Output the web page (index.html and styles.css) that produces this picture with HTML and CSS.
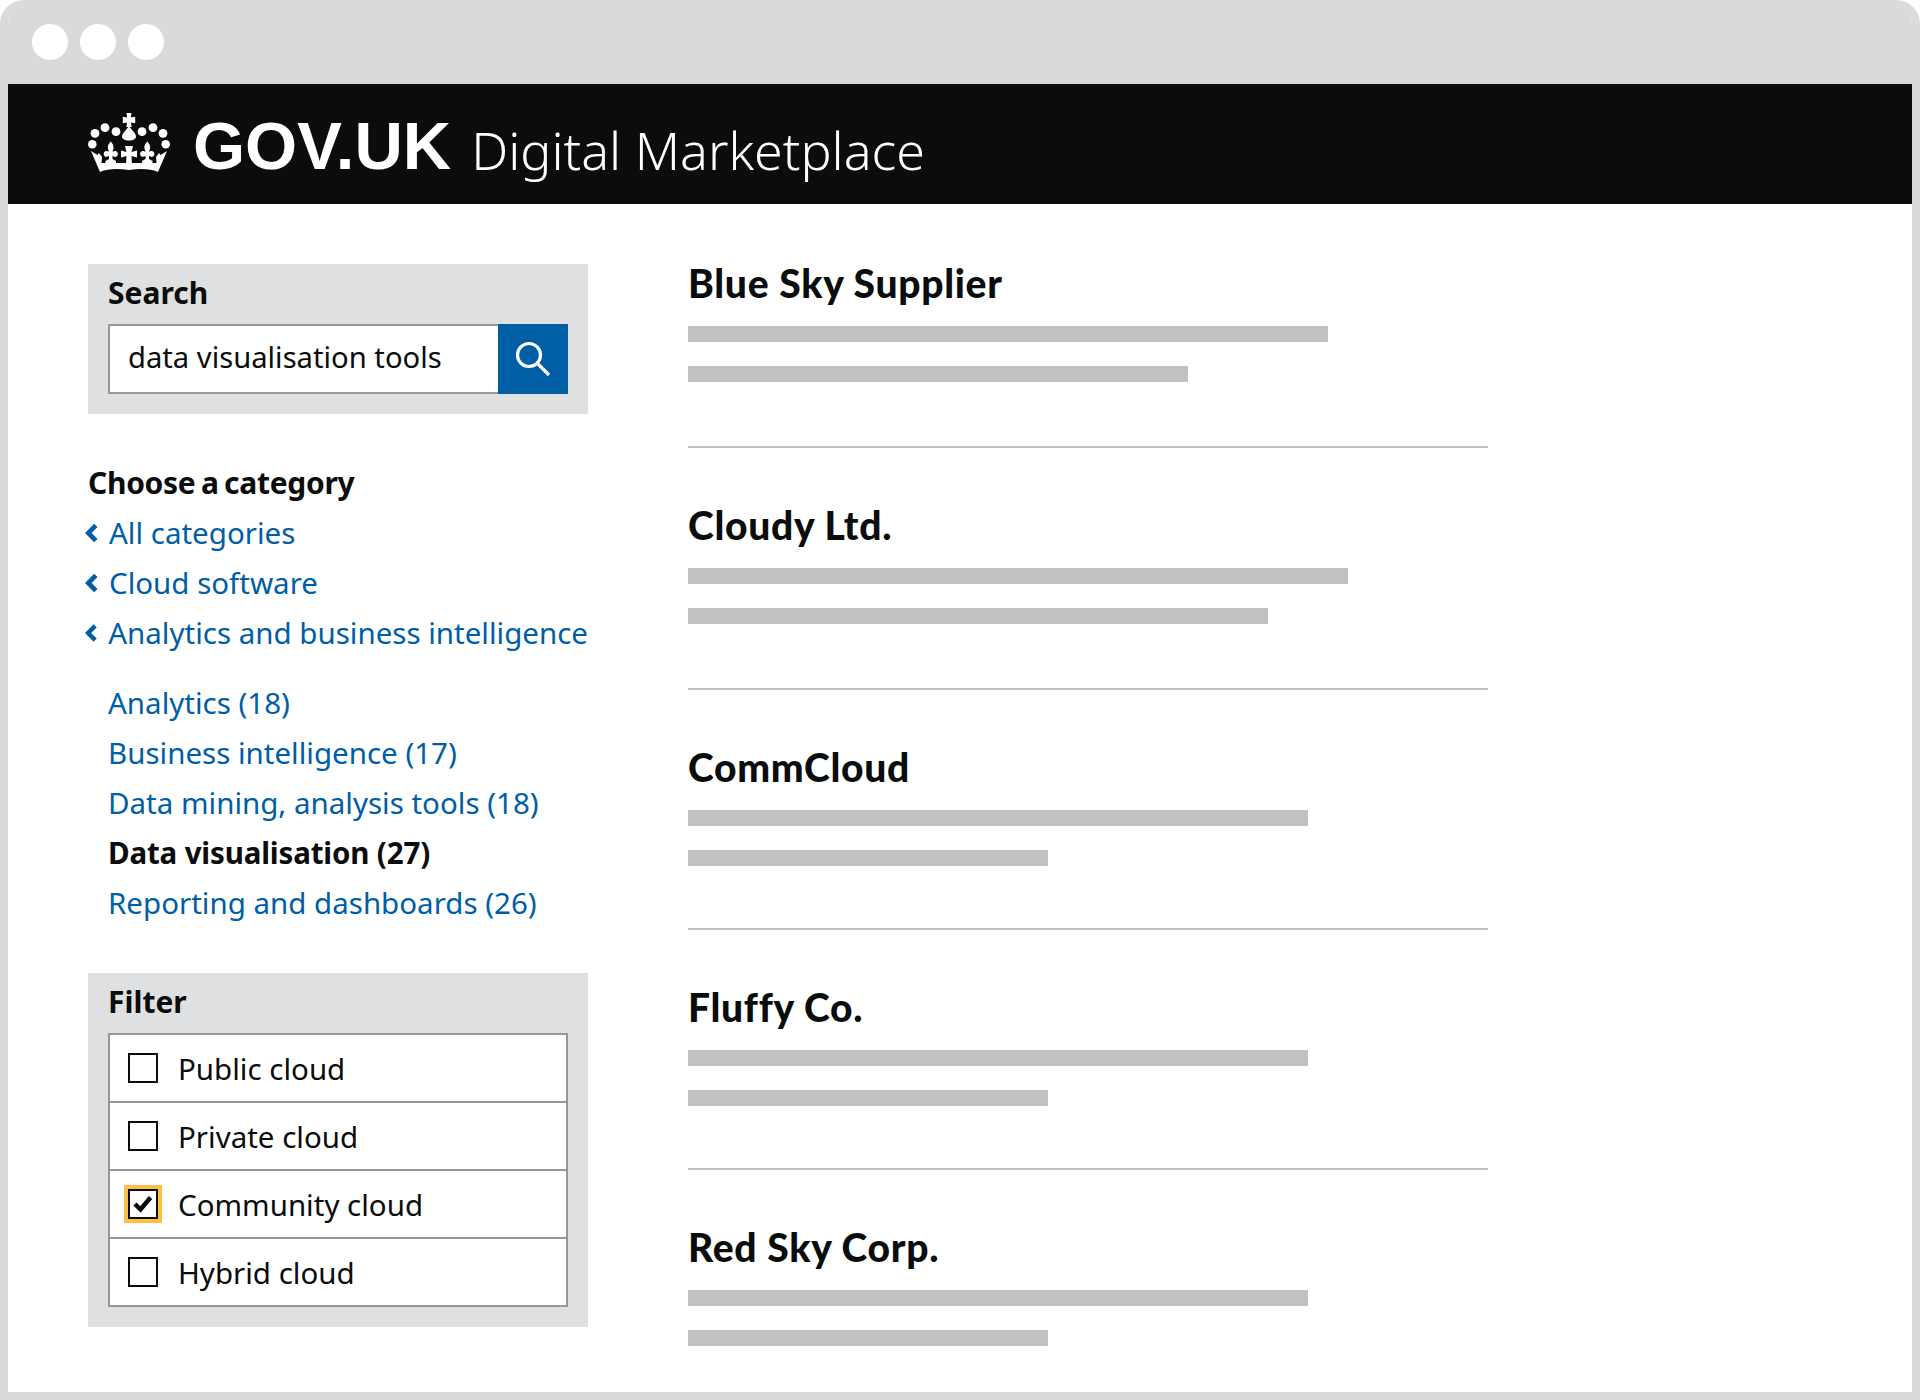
FILE: index.html
```html
<!DOCTYPE html>
<html lang="en">
<head>
    <meta charset="UTF-8">
    <title>Digital Marketplace</title>
    <link rel="stylesheet" href="styles.css">
</head>
<body>
    <div class="browser">
        <div class="browser-bar">
            <span class="dot"></span>
            <span class="dot"></span>
            <span class="dot"></span>
        </div>

        <header class="site-header">
            <svg class="crown" viewBox="0 0 82 60" width="82" height="60" fill="#fff">
                <g id="crown-half">
                    <circle cx="17" cy="14.700" r="4.400"/>
                    <circle cx="28" cy="18.700" r="4.400"/>
                    <circle cx="7" cy="20.300" r="4.400"/>
                    <circle cx="4.300" cy="31.300" r="4.300"/>
                    <!-- outer point and band -->
                    <path d="M3 38l6.500 4 1.500-2 3 4-.5 6H41v7c-11-1.500-21-1.500-29 2z"/>
                    <!-- fleur -->
                    <path d="M22.700 28.500c2.300 2.500 3.800 5 2.300 8.500l-.4 2c1.400-1.500 3.900-1.500 4.900.5 1 2 0 4-2 4.500l-3-1v3l3.500 2v3H17.500v-3l3.500-2v-3l-3 1c-2-.5-3-2.500-2-4.500 1-2 3.500-2 4.800-.5l-.4-2c-1.400-3.500 0-6 2.300-8.500z"/>
                    <!-- left side of the cross -->
                    <path d="M41 33h-4l1.500 6-5.500-1.500v7l5.500-1.500-.5 8h3z"/>
                </g>
                <use href="#crown-half" transform="matrix(-1 0 0 1 82 0)"/>
                <!-- top cross and orb -->
                <path d="M38.500 0h5l-.6 4.600 4.300-.8v6.400l-4.300-.8.800 4.600h-5.400l.8-4.600-4.300.8V3.800l4.300.8z"/>
                <path d="M41 13c2.500 4 7 7 7 10.500 0 2.500-3 4-7 4s-7-1.500-7-4C34 20 38.500 17 41 13z"/>
            </svg>
            <span class="logo-text">GOV.UK</span>
            <span class="service-name">Digital Marketplace</span>
        </header>

        <main class="page">
            <aside class="sidebar">
                <form class="panel search-panel">
                    <label class="panel-title" for="search">Search</label>
                    <div class="search-row">
                        <input class="search-input" id="search" type="text" value="data visualisation tools">
                        <button class="search-button" type="button" aria-label="Search">
                            <svg viewBox="0 0 40 40" width="40" height="40" fill="none" stroke="#fff" stroke-width="3.200">
                                <circle cx="16" cy="16" r="11.500"/>
                                <path d="M24 24l12 12"/>
                            </svg>
                        </button>
                    </div>
                </form>

                <nav class="categories">
                    <h2 class="cat-title">Choose a category</h2>
                    <ul class="cat-parents">
                        <li><svg class="chevron" viewBox="0 0 12 18" width="13" height="20"><path d="M10 2L3 9l7 7"/></svg><a href="#">All categories</a></li>
                        <li><svg class="chevron" viewBox="0 0 12 18" width="13" height="20"><path d="M10 2L3 9l7 7"/></svg><a href="#">Cloud software</a></li>
                        <li><svg class="chevron" viewBox="0 0 12 18" width="13" height="20"><path d="M10 2L3 9l7 7"/></svg><a href="#">Analytics and business intelligence</a></li>
                    </ul>
                    <ul class="cat-children">
                        <li><a href="#">Analytics (18)</a></li>
                        <li><a href="#">Business intelligence (17)</a></li>
                        <li><a href="#">Data mining, analysis tools (18)</a></li>
                        <li class="current">Data visualisation (27)</li>
                        <li><a href="#">Reporting and dashboards (26)</a></li>
                    </ul>
                </nav>

                <div class="panel filter-panel">
                    <div class="panel-title">Filter</div>
                    <div class="filter-list">
                        <div class="filter-row"><span class="checkbox"></span>Public cloud</div>
                        <div class="filter-row"><span class="checkbox"></span>Private cloud</div>
                        <div class="filter-row">
                            <span class="checkbox focused">
                                <svg viewBox="0 0 26 26" width="26" height="26" fill="none" stroke="#0b0c0c" stroke-width="4.500"><path d="M5 13l5.500 5.500L20.500 6.500"/></svg>
                            </span>Community cloud
                        </div>
                        <div class="filter-row"><span class="checkbox"></span>Hybrid cloud</div>
                    </div>
                </div>
            </aside>

            <section class="results">
                <article class="result tall">
                    <h3>Blue Sky Supplier</h3>
                    <div class="bar w640"></div>
                    <div class="bar w500"></div>
                </article>
                <article class="result tall">
                    <h3>Cloudy Ltd.</h3>
                    <div class="bar w660"></div>
                    <div class="bar w580"></div>
                </article>
                <article class="result">
                    <h3>CommCloud</h3>
                    <div class="bar w620"></div>
                    <div class="bar w360"></div>
                </article>
                <article class="result">
                    <h3>Fluffy Co.</h3>
                    <div class="bar w620"></div>
                    <div class="bar w360"></div>
                </article>
                <article class="result last">
                    <h3>Red Sky Corp.</h3>
                    <div class="bar w620"></div>
                    <div class="bar w360"></div>
                </article>
            </section>
        </main>
    </div>
</body>
</html>
```

FILE: styles.css
```css
body {
    margin: 0;
    background-color: #fff;
    color: #0b0c0c;
    font-family: 'Noto Sans', sans-serif;
    font-size: 29.5px;
}
.browser {
    box-sizing: border-box;
    width: 1920px;
    height: 1400px;
    border: 8px solid #dadada;
    border-top: none;
    border-radius: 24px 24px 0 0;
    overflow: hidden;
}
.browser-bar {
    display: flex;
    gap: 12px;
    height: 84px;
    box-sizing: border-box;
    padding: 24px 0 0 24px;
    background-color: #dadada;
}
.dot {
    width: 36px;
    height: 36px;
    border-radius: 50%;
    background-color: #fff;
}
.site-header {
    display: flex;
    align-items: center;
    height: 120px;
    padding-left: 80px;
    background-color: #0b0c0c;
    color: #fff;
}
.crown {
    margin-right: 23px;
    margin-top: -2px;
}
.logo-text {
    font-family: 'Liberation Sans', sans-serif;
    font-weight: bold;
    font-size: 67px;
    margin-right: 20px;
    margin-top: 2px;
}
.service-name {
    font-weight: 300;
    font-size: 52px;
    margin-top: 10px;
}
.page {
    display: flex;
    padding-left: 80px;
}
.sidebar {
    width: 500px;
    margin-right: 100px;
    padding-top: 60px;
}
.panel {
    display: block;
    background-color: #dee0e2;
    padding: 0 20px 20px;
}
.panel-title {
    display: block;
    height: 60px;
    line-height: 58px;
    font-weight: bold;
    font-size: 30px;
}
.search-row {
    display: flex;
    height: 70px;
}
.search-input {
    flex: 1;
    min-width: 0;
    box-sizing: border-box;
    border: 2px solid #959799;
    border-right: none;
    padding: 0 18px 4px;
    font-family: inherit;
    font-size: 29.2px;
    color: #0b0c0c;
    outline: none;
}
.search-button {
    display: flex;
    align-items: center;
    justify-content: center;
    width: 70px;
    padding: 0;
    border: none;
    background-color: #005ea5;
}
.categories {
    padding: 44px 0 45px;
}
.cat-title {
    margin: 0;
    font-size: 30px;
    line-height: 50px;
    letter-spacing: -0.3px;
    word-spacing: -2px;
}
ul {
    margin: 0;
    padding: 0;
    list-style: none;
    line-height: 50px;
}
li {
    white-space: nowrap;
}
a {
    color: #005ea5;
    text-decoration: none;
}
.cat-parents li {
    display: flex;
    align-items: center;
}
.chevron {
    margin: 0 11px 0 -3px;
    fill: none;
    stroke: #005ea5;
    stroke-width: 4.400;
}
.cat-children {
    margin-top: 20px;
    padding-left: 20px;
}
.current {
    font-weight: bold;
    letter-spacing: -0.15px;
}
.filter-list {
    border: 2px solid #959799;
    background-color: #fff;
}
.filter-row {
    display: flex;
    align-items: center;
    height: 66px;
    padding-left: 18px;
    border-top: 2px solid #959799;
}
.filter-row:first-child {
    border-top: none;
}
.checkbox {
    box-sizing: border-box;
    display: flex;
    align-items: center;
    justify-content: center;
    width: 30px;
    height: 30px;
    margin-right: 20px;
    border: 2px solid #0b0c0c;
    background-color: #fff;
}
.focused {
    outline: 4px solid #ffbf47;
}
.results {
    width: 800px;
    padding-top: 2px;
}
.result {
    padding: 55px 0 62px;
    border-bottom: 2px solid #bfc1c3;
}
.result.tall {
    padding-bottom: 64px;
}
.result.last {
    padding-bottom: 0;
    border-bottom: none;
}
.result h3 {
    margin: 0 0 21px;
    font-family: 'Lato', sans-serif;
    font-weight: 900;
    font-size: 39px;
    line-height: 44px;
    letter-spacing: 0.7px;
}
.bar {
    height: 16px;
    background-color: #bfc1c3;
}
.bar + .bar {
    margin-top: 24px;
}
.w640 { width: 640px; }
.w500 { width: 500px; }
.w660 { width: 660px; }
.w580 { width: 580px; }
.w620 { width: 620px; }
.w360 { width: 360px; }
```
